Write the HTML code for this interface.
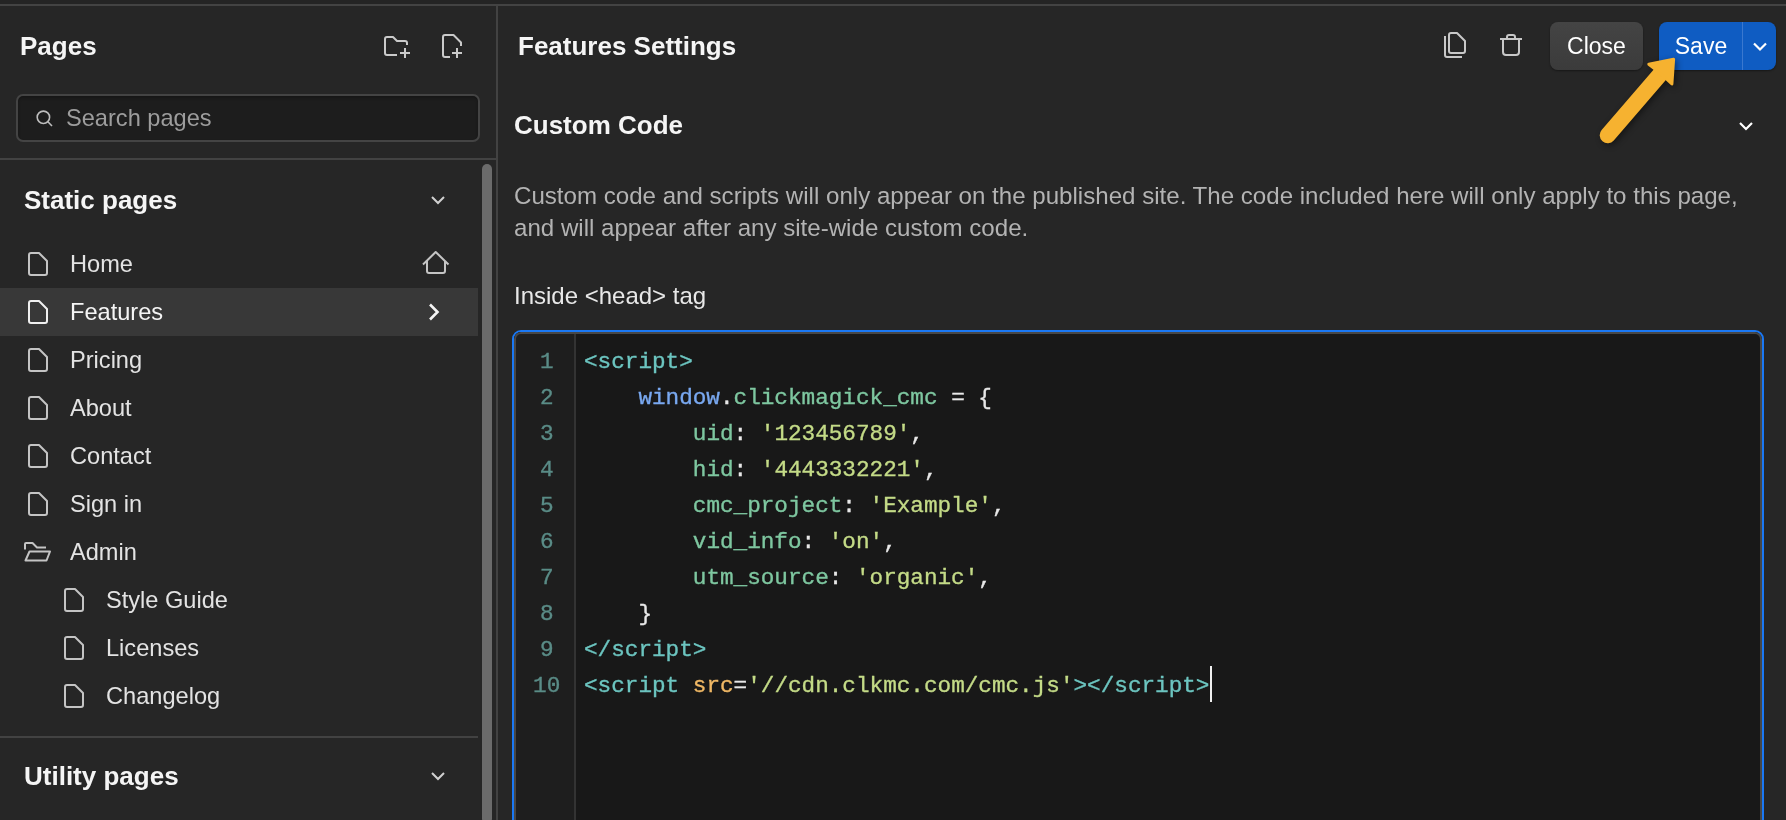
<!DOCTYPE html>
<html><head><meta charset="utf-8">
<style>
*{box-sizing:border-box;margin:0;padding:0}
html,body{width:1786px;height:820px;overflow:hidden;background:#262626;font-family:"Liberation Sans",sans-serif}
.abs{position:absolute;will-change:transform}
#topstrip{left:0;top:0;width:1786px;height:4px;background:#242424}
#topline{left:0;top:4px;width:1786px;height:2px;background:#434343}
#divider{left:496px;top:6px;width:2px;height:814px;background:#424242}
.h{font-weight:bold;font-size:26px;color:#f5f5f5;white-space:nowrap;line-height:30px}
.nav{font-size:23.6px;color:#e3e3e3;white-space:nowrap;line-height:28px}
#search{left:16px;top:94px;width:464px;height:48px;border:2px solid #444;border-radius:7px;background:#1d1d1d;box-shadow:inset 0 2px 3px rgba(0,0,0,.25)}
.sep{left:0;height:2px;background:#424242}
#scroll{left:482px;top:164px;width:10px;height:660px;border-radius:5px;background:#6b6b6b}
#hl{left:0;top:288px;width:478px;height:48px;background:#383838}
svg{position:absolute;overflow:visible}
.btn{border-radius:8px;font-size:23px;color:#fff;line-height:48px;text-align:center}
#editor{left:512px;top:330px;width:1252px;height:500px;border:2px solid #1a78f4;border-radius:9px;background:#181818;overflow:hidden}
#inner{position:absolute;left:0;top:0;right:0;bottom:0;border:2px solid #474747;border-radius:7px}
#gutter{position:absolute;left:0;top:0;width:62px;bottom:0;background:#1e1e1e;border-right:2px solid #333}
.code{font-family:"Liberation Mono",monospace;font-size:22.67px;line-height:36px;white-space:pre;-webkit-text-stroke:0.35px currentColor}
#lnums{position:absolute;left:0;top:12px;width:65.4px;text-align:center;color:#5a8c87}
#lines{position:absolute;left:70px;top:12px;color:#e8e8e8}
.t{color:#6cc5c0}.w{color:#79a8f0}.p{color:#7ec7a0}.s{color:#c4db87}.a{color:#f0b865}
</style></head>
<body>
<div id="topstrip" class="abs"></div>
<div id="topline" class="abs"></div>
<div id="divider" class="abs"></div>

<!-- LEFT PANEL -->
<div class="abs h" style="left:20px;top:31px">Pages</div>
<svg style="left:0;top:0" width="1786" height="820" viewBox="0 0 1786 820" fill="none" stroke="#cacaca" stroke-width="2" stroke-linecap="butt" stroke-linejoin="round">
  <!-- folder plus -->
  <path d="M397 55H387a2 2 0 0 1-2-2V39a2 2 0 0 1 2-2H393L397 41H405a2 2 0 0 1 2 2V45"/>
  <path d="M400 53H410M405 48V58"/>
  <!-- page plus -->
  <path d="M450 57H445a2 2 0 0 1-2-2V37a2 2 0 0 1 2-2H453.5L461 42.5V46"/>
  <path d="M452 53H462M457 48V58"/>
</svg>

<div id="search" class="abs"></div>
<svg style="left:0;top:0" width="1786" height="820" viewBox="0 0 1786 820" fill="none" stroke="#bdbdbd" stroke-width="1.6">
  <circle cx="43.4" cy="117.3" r="6.2"/>
  <path d="M47.9 121.8L52 126"/>
</svg>
<div class="abs nav" style="left:66px;top:104px;color:#9d9d9d;font-size:23.6px">Search pages</div>

<div class="abs sep" style="top:158px;width:496px"></div>
<div id="scroll" class="abs"></div>

<div class="abs h" style="left:24px;top:185px">Static pages</div>
<svg style="left:0;top:0" width="1786" height="820" viewBox="0 0 1786 820" fill="none" stroke="#d0d0d0" stroke-width="2">
  <path d="M432 197L438 203L444 197"/>
  <path d="M432 773L438 779L444 773"/>
</svg>

<div id="hl" class="abs"></div>

<!-- nav icons -->
<svg style="left:0;top:0" width="1786" height="820" viewBox="0 0 1786 820" fill="none" stroke="#c4c4c4" stroke-width="2" stroke-linejoin="round">
  <path d="M31 253H39L47 261V273a2 2 0 0 1-2 2H31a2 2 0 0 1-2-2V255a2 2 0 0 1 2-2Z"/>
  <path d="M31 301H39L47 309V321a2 2 0 0 1-2 2H31a2 2 0 0 1-2-2V303a2 2 0 0 1 2-2Z" stroke="#f0f0f0"/>
  <path d="M31 349H39L47 357V369a2 2 0 0 1-2 2H31a2 2 0 0 1-2-2V351a2 2 0 0 1 2-2Z"/>
  <path d="M31 397H39L47 405V417a2 2 0 0 1-2 2H31a2 2 0 0 1-2-2V399a2 2 0 0 1 2-2Z"/>
  <path d="M31 445H39L47 453V465a2 2 0 0 1-2 2H31a2 2 0 0 1-2-2V447a2 2 0 0 1 2-2Z"/>
  <path d="M31 493H39L47 501V513a2 2 0 0 1-2 2H31a2 2 0 0 1-2-2V495a2 2 0 0 1 2-2Z"/>
  <!-- open folder -->
  <path d="M25 549.5V544a1 1 0 0 1 1-1H32.5L37 547.5H46"/>
  <path d="M29.5 551.5H50L46.5 560.5H25.5Z"/>
  <path d="M67 589H75L83 597V609a2 2 0 0 1-2 2H67a2 2 0 0 1-2-2V591a2 2 0 0 1 2-2Z"/>
  <path d="M67 637H75L83 645V657a2 2 0 0 1-2 2H67a2 2 0 0 1-2-2V639a2 2 0 0 1 2-2Z"/>
  <path d="M67 685H75L83 693V705a2 2 0 0 1-2 2H67a2 2 0 0 1-2-2V687a2 2 0 0 1 2-2Z"/>
  <!-- home -->
  <path d="M423 264.5L435.7 252L448.5 264.5"/>
  <path d="M427 261V271a2 2 0 0 0 2 2H443a2 2 0 0 0 2-2V261"/>
  <!-- chevron right -->
  <path d="M430 304.5L437.5 312L430 319.5" stroke="#f5f5f5" stroke-width="2.6" stroke-linejoin="miter"/>
</svg>

<div class="abs nav" style="left:70px;top:250px">Home</div>
<div class="abs nav" style="left:70px;top:298px;color:#f5f5f5">Features</div>
<div class="abs nav" style="left:70px;top:346px">Pricing</div>
<div class="abs nav" style="left:70px;top:394px">About</div>
<div class="abs nav" style="left:70px;top:442px">Contact</div>
<div class="abs nav" style="left:70px;top:490px">Sign in</div>
<div class="abs nav" style="left:70px;top:538px">Admin</div>
<div class="abs nav" style="left:106px;top:586px">Style Guide</div>
<div class="abs nav" style="left:106px;top:634px">Licenses</div>
<div class="abs nav" style="left:106px;top:682px">Changelog</div>

<div class="abs sep" style="top:736px;width:478px"></div>
<div class="abs h" style="left:24px;top:761px">Utility pages</div>

<!-- RIGHT PANEL -->
<div class="abs h" style="left:518px;top:31px">Features Settings</div>
<svg style="left:0;top:0" width="1786" height="820" viewBox="0 0 1786 820" fill="none" stroke="#c8c8c8" stroke-width="2" stroke-linejoin="round">
  <!-- copy -->
  <path d="M1451 33H1457L1465 41V51a2 2 0 0 1-2 2H1451a2 2 0 0 1-2-2V35a2 2 0 0 1 2-2Z"/>
  <path d="M1445 36V55a2 2 0 0 0 2 2H1462"/>
  <!-- trash -->
  <path d="M1500 39H1522"/>
  <path d="M1507 39V37a2 2 0 0 1 2-2H1513a2 2 0 0 1 2 2V39"/>
  <path d="M1503 39V52a3 3 0 0 0 3 3H1516a3 3 0 0 0 3-3V39"/>
</svg>
<div class="abs btn" style="left:1550px;top:22px;width:93px;height:48px;background:linear-gradient(#444,#3b3b3b);box-shadow:0 1px 2px rgba(0,0,0,.4)">Close</div>
<div class="abs btn" style="left:1659px;top:22px;width:117px;height:48px;background:#0f5cc2;box-shadow:0 1px 2px rgba(0,0,0,.4)">
  <div class="abs" style="left:0;top:0;width:84px;height:48px;text-align:center">Save</div>
  <div class="abs" style="left:83px;top:0;width:1px;height:48px;background:#3a78cf"></div>
</div>
<svg style="left:0;top:0" width="1786" height="820" viewBox="0 0 1786 820" fill="none" stroke="#fff" stroke-width="2.2">
  <path d="M1754 43.5L1760 49.5L1766 43.5"/>
  <path d="M1740 123L1746 129L1752 123"/>
</svg>

<div class="abs h" style="left:514px;top:110px">Custom Code</div>
<div class="abs" style="left:514px;top:180px;width:1250px;font-size:24.1px;line-height:32px;color:#b3b3b3">Custom code and scripts will only appear on the published site. The code included here will only apply to this page,<br>and will appear after any site-wide custom code.</div>
<div class="abs" style="left:514px;top:280px;font-size:24px;line-height:32px;color:#e8e8e8">Inside &lt;head&gt; tag</div>

<div id="editor" class="abs">
  <div id="gutter"></div>
  <div id="inner"></div>
  <div id="lnums" class="code">1
2
3
4
5
6
7
8
9
10</div>
  <div id="lines" class="code"><span class="t">&lt;script&gt;</span>
    <span class="w">window</span>.<span class="p">clickmagick_cmc</span> = {
        <span class="p">uid</span>: <span class="s">'123456789'</span>,
        <span class="p">hid</span>: <span class="s">'4443332221'</span>,
        <span class="p">cmc_project</span>: <span class="s">'Example'</span>,
        <span class="p">vid_info</span>: <span class="s">'on'</span>,
        <span class="p">utm_source</span>: <span class="s">'organic'</span>,
    }
<span class="t">&lt;/script&gt;</span>
<span class="t">&lt;script </span><span class="a">src</span>=<span class="s">'//cdn.clkmc.com/cmc.js'</span><span class="t">&gt;&lt;/script&gt;</span></div>
  <div class="abs" style="left:696px;top:334px;width:2px;height:36px;background:#f0f0f0"></div>
</div>

<!-- arrow -->
<svg style="left:0;top:0;filter:drop-shadow(2px 2px 3px rgba(0,0,0,.45))" width="1786" height="820" viewBox="0 0 1786 820">
  <path d="M1607.7 135.2L1659.8 74.7" stroke="#f6b230" stroke-width="16" stroke-linecap="round" fill="none"/>
  <path d="M1673.6 59.3L1648.8 64.2L1654.4 68.6L1667 79.4L1671.9 83.9Z" fill="#f6b230" stroke="#f6b230" stroke-width="3" stroke-linejoin="round"/>
</svg>
</body></html>
